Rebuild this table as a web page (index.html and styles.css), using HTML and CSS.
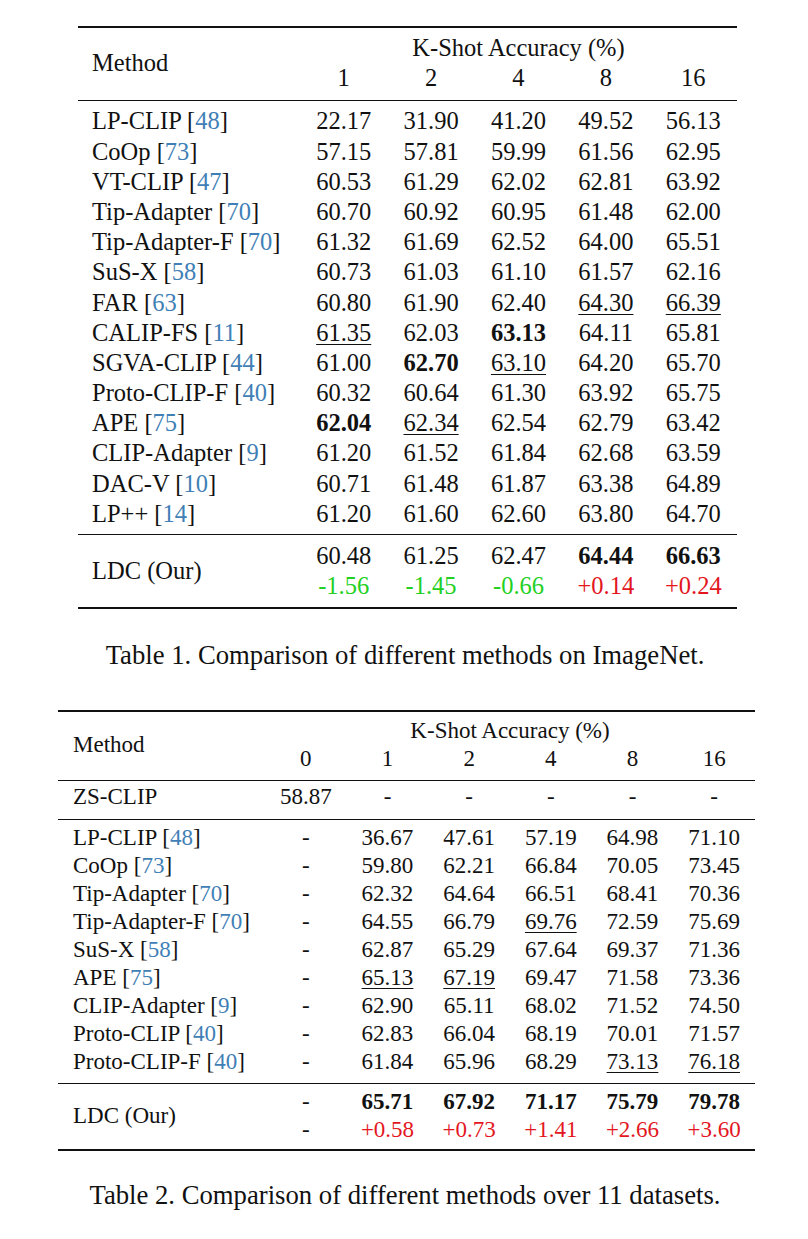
FILE: index.html
```html
<!DOCTYPE html>
<html>
<head>
<meta charset="utf-8">
<link rel="stylesheet" href="styles.css">
</head>
<body>
<div class="page">
  <div class="tbl t1">
    <div class="sec head">
      <div class="hgrid">
        <div class="method">Method</div>
        <div class="kshot">K-Shot Accuracy (%)</div>
        <div class="c">1</div><div class="c">2</div><div class="c">4</div><div class="c">8</div><div class="c">16</div>
      </div>
    </div>
    <div class="sec body">
      <div class="row"><div class="m">LP-CLIP [<span class="ref">48</span>]</div><div class="c">22.17</div><div class="c">31.90</div><div class="c">41.20</div><div class="c">49.52</div><div class="c">56.13</div></div>
      <div class="row"><div class="m">CoOp [<span class="ref">73</span>]</div><div class="c">57.15</div><div class="c">57.81</div><div class="c">59.99</div><div class="c">61.56</div><div class="c">62.95</div></div>
      <div class="row"><div class="m">VT-CLIP [<span class="ref">47</span>]</div><div class="c">60.53</div><div class="c">61.29</div><div class="c">62.02</div><div class="c">62.81</div><div class="c">63.92</div></div>
      <div class="row"><div class="m">Tip-Adapter [<span class="ref">70</span>]</div><div class="c">60.70</div><div class="c">60.92</div><div class="c">60.95</div><div class="c">61.48</div><div class="c">62.00</div></div>
      <div class="row"><div class="m">Tip-Adapter-F [<span class="ref">70</span>]</div><div class="c">61.32</div><div class="c">61.69</div><div class="c">62.52</div><div class="c">64.00</div><div class="c">65.51</div></div>
      <div class="row"><div class="m">SuS-X [<span class="ref">58</span>]</div><div class="c">60.73</div><div class="c">61.03</div><div class="c">61.10</div><div class="c">61.57</div><div class="c">62.16</div></div>
      <div class="row"><div class="m">FAR [<span class="ref">63</span>]</div><div class="c">60.80</div><div class="c">61.90</div><div class="c">62.40</div><div class="c"><u>64.30</u></div><div class="c"><u>66.39</u></div></div>
      <div class="row"><div class="m">CALIP-FS [<span class="ref">11</span>]</div><div class="c"><u>61.35</u></div><div class="c">62.03</div><div class="c"><b>63.13</b></div><div class="c">64.11</div><div class="c">65.81</div></div>
      <div class="row"><div class="m">SGVA-CLIP [<span class="ref">44</span>]</div><div class="c">61.00</div><div class="c"><b>62.70</b></div><div class="c"><u>63.10</u></div><div class="c">64.20</div><div class="c">65.70</div></div>
      <div class="row"><div class="m">Proto-CLIP-F [<span class="ref">40</span>]</div><div class="c">60.32</div><div class="c">60.64</div><div class="c">61.30</div><div class="c">63.92</div><div class="c">65.75</div></div>
      <div class="row"><div class="m">APE [<span class="ref">75</span>]</div><div class="c"><b>62.04</b></div><div class="c"><u>62.34</u></div><div class="c">62.54</div><div class="c">62.79</div><div class="c">63.42</div></div>
      <div class="row"><div class="m">CLIP-Adapter [<span class="ref">9</span>]</div><div class="c">61.20</div><div class="c">61.52</div><div class="c">61.84</div><div class="c">62.68</div><div class="c">63.59</div></div>
      <div class="row"><div class="m">DAC-V [<span class="ref">10</span>]</div><div class="c">60.71</div><div class="c">61.48</div><div class="c">61.87</div><div class="c">63.38</div><div class="c">64.89</div></div>
      <div class="row"><div class="m">LP++ [<span class="ref">14</span>]</div><div class="c">61.20</div><div class="c">61.60</div><div class="c">62.60</div><div class="c">63.80</div><div class="c">64.70</div></div>
    </div>
    <div class="sec foot">
      <div class="fgrid">
        <div class="method">LDC (Our)</div>
        <div class="c">60.48</div><div class="c">61.25</div><div class="c">62.47</div><div class="c"><b>64.44</b></div><div class="c"><b>66.63</b></div>
        <div class="c neg">-1.56</div><div class="c neg">-1.45</div><div class="c neg">-0.66</div><div class="c pos">+0.14</div><div class="c pos">+0.24</div>
      </div>
    </div>
  </div>
  <p class="caption cap1">Table 1. Comparison of different methods on ImageNet.</p>

  <div class="tbl t2">
    <div class="sec head">
      <div class="hgrid">
        <div class="method">Method</div>
        <div class="kshot">K-Shot Accuracy (%)</div>
        <div class="c">0</div><div class="c">1</div><div class="c">2</div><div class="c">4</div><div class="c">8</div><div class="c">16</div>
      </div>
    </div>
    <div class="sec zs">
      <div class="row"><div class="m">ZS-CLIP</div><div class="c">58.87</div><div class="c">-</div><div class="c">-</div><div class="c">-</div><div class="c">-</div><div class="c">-</div></div>
    </div>
    <div class="sec body">
      <div class="row"><div class="m">LP-CLIP [<span class="ref">48</span>]</div><div class="c">-</div><div class="c">36.67</div><div class="c">47.61</div><div class="c">57.19</div><div class="c">64.98</div><div class="c">71.10</div></div>
      <div class="row"><div class="m">CoOp [<span class="ref">73</span>]</div><div class="c">-</div><div class="c">59.80</div><div class="c">62.21</div><div class="c">66.84</div><div class="c">70.05</div><div class="c">73.45</div></div>
      <div class="row"><div class="m">Tip-Adapter [<span class="ref">70</span>]</div><div class="c">-</div><div class="c">62.32</div><div class="c">64.64</div><div class="c">66.51</div><div class="c">68.41</div><div class="c">70.36</div></div>
      <div class="row"><div class="m">Tip-Adapter-F [<span class="ref">70</span>]</div><div class="c">-</div><div class="c">64.55</div><div class="c">66.79</div><div class="c"><u>69.76</u></div><div class="c">72.59</div><div class="c">75.69</div></div>
      <div class="row"><div class="m">SuS-X [<span class="ref">58</span>]</div><div class="c">-</div><div class="c">62.87</div><div class="c">65.29</div><div class="c">67.64</div><div class="c">69.37</div><div class="c">71.36</div></div>
      <div class="row"><div class="m">APE [<span class="ref">75</span>]</div><div class="c">-</div><div class="c"><u>65.13</u></div><div class="c"><u>67.19</u></div><div class="c">69.47</div><div class="c">71.58</div><div class="c">73.36</div></div>
      <div class="row"><div class="m">CLIP-Adapter [<span class="ref">9</span>]</div><div class="c">-</div><div class="c">62.90</div><div class="c">65.11</div><div class="c">68.02</div><div class="c">71.52</div><div class="c">74.50</div></div>
      <div class="row"><div class="m">Proto-CLIP [<span class="ref">40</span>]</div><div class="c">-</div><div class="c">62.83</div><div class="c">66.04</div><div class="c">68.19</div><div class="c">70.01</div><div class="c">71.57</div></div>
      <div class="row"><div class="m">Proto-CLIP-F [<span class="ref">40</span>]</div><div class="c">-</div><div class="c">61.84</div><div class="c">65.96</div><div class="c">68.29</div><div class="c"><u>73.13</u></div><div class="c"><u>76.18</u></div></div>
    </div>
    <div class="sec foot">
      <div class="fgrid">
        <div class="method">LDC (Our)</div>
        <div class="c">-</div><div class="c"><b>65.71</b></div><div class="c"><b>67.92</b></div><div class="c"><b>71.17</b></div><div class="c"><b>75.79</b></div><div class="c"><b>79.78</b></div>
        <div class="c">-</div><div class="c pos">+0.58</div><div class="c pos">+0.73</div><div class="c pos">+1.41</div><div class="c pos">+2.66</div><div class="c pos">+3.60</div>
      </div>
    </div>
  </div>
  <p class="caption cap2">Table 2. Comparison of different methods over 11 datasets.</p>
</div>
</body>
</html>
```

FILE: styles.css
```css
html, body {
  margin: 0;
  padding: 0;
  background: #ffffff;
}

.page {
  width: 808px;
  padding-top: 26px;
  font-family: "Liberation Serif", "Times New Roman", serif;
  color: #111111;
}

.tbl {
  border-top: 2px solid #111111;
  border-bottom: 2px solid #111111;
}

.sec {
  border-bottom: 1px solid #111111;
}
.sec.foot {
  border-bottom: none;
}

.c {
  text-align: center;
  white-space: nowrap;
}

.m, .method {
  white-space: nowrap;
}

.ref {
  color: #3f7fb6;
}

b {
  font-weight: bold;
}

u {
  text-decoration: underline;
  text-decoration-thickness: 1px;
  text-underline-offset: 3px;
}

.neg {
  color: #22d022;
}

.pos {
  color: #e3161e;
}

/* ---------- Table 1 ---------- */
.t1 {
  width: 659px;
  margin-left: 78px;
  font-size: 24.5px;
}
.t1 .row,
.t1 .hgrid,
.t1 .fgrid {
  display: grid;
  grid-template-columns: 222px repeat(5, 1fr);
}
.t1 .row > div,
.t1 .hgrid > div,
.t1 .fgrid > div {
  height: 30.2px;
  line-height: 30.2px;
}
.t1 .m,
.t1 .method {
  padding-left: 14px;
}
.t1 .hgrid .method,
.t1 .fgrid .method {
  grid-row: 1 / span 2;
  grid-column: 1;
  height: auto;
  align-self: center;
}
.t1 .kshot {
  grid-column: 2 / span 5;
  text-align: center;
}
.t1 .head {
  padding: 5px 0 7px;
}
.t1 .body {
  padding: 5px 0 5px;
}
.t1 .foot {
  padding: 6px 0 6px;
}

.caption {
  margin: 0;
  text-align: center;
  font-size: 26.7px;
  line-height: 30px;
  height: 30px;
  white-space: nowrap;
}
.cap1 {
  margin-top: 31px;
  padding-left: 2px;
}

/* ---------- Table 2 ---------- */
.t2 {
  width: 697px;
  margin-left: 58px;
  margin-top: 40px;
  font-size: 23px;
}
.t2 .row,
.t2 .hgrid,
.t2 .fgrid {
  display: grid;
  grid-template-columns: 207px repeat(6, 1fr);
}
.t2 .row > div,
.t2 .hgrid > div,
.t2 .fgrid > div {
  height: 28.1px;
  line-height: 28.1px;
}
.t2 .m,
.t2 .method {
  padding-left: 15px;
}
.t2 .hgrid .method,
.t2 .fgrid .method {
  grid-row: 1 / span 2;
  grid-column: 1;
  height: auto;
  align-self: center;
}
.t2 .kshot {
  grid-column: 2 / span 6;
  text-align: center;
}
.t2 .head {
  padding: 5px 0 6px;
}
.t2 .zs {
  padding: 2px 0 8px;
}
.t2 .body {
  padding: 4px 0 6px;
}
.t2 .foot {
  padding: 4px 0 5px;
}
.cap2 {
  margin-top: 29px;
  padding-left: 2px;
}
```
